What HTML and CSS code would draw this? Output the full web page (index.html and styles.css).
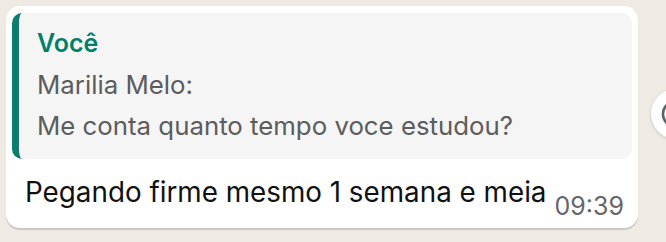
FILE: index.html
```html
<!DOCTYPE html>
<html lang="pt-BR">
<head>
    <meta charset="UTF-8">
    <meta name="viewport" content="width=device-width, initial-scale=1.0">
    <title>Mensagem</title>
    <link rel="stylesheet" href="styles.css">
</head>
<body>
    <div class="chat-row">
        <div class="bubble">
            <div class="quote">
                <div class="quote-author">Você</div>
                <div class="quote-text">Marilia Melo:</div>
                <div class="quote-text">Me conta quanto tempo voce estudou?</div>
            </div>
            <div class="message">
                <span class="message-text">Pegando firme mesmo 1 semana e meia</span>
                <span class="message-time">09:39</span>
            </div>
        </div>
        <button class="react-button" aria-label="Reagir">
            <svg width="30" height="30" viewBox="0 0 30 30" fill="none" stroke="#54656f" stroke-width="2.6" stroke-linecap="round">
                <circle cx="15" cy="15" r="13"/>
                <path d="M9 18c1.6 2.6 3.6 3.8 6 3.8s4.4-1.2 6-3.8"/>
                <circle cx="10.5" cy="11.5" r="0.8" fill="#54656f"/>
                <circle cx="19.5" cy="11.5" r="0.8" fill="#54656f"/>
            </svg>
        </button>
    </div>
</body>
</html>
```

FILE: styles.css
```css
body {
    margin: 0;
    height: 242px;
    overflow: hidden;
    background-color: #efeae3;
    font-family: Inter, 'Liberation Sans', sans-serif;
}
.chat-row {
    display: flex;
    align-items: center;
    gap: 13px;
    padding: 6px 0 0 6px;
    overflow: hidden;
}
.bubble {
    width: 632px;
    flex-shrink: 0;
    background: #fff;
    border-radius: 14px;
    padding: 7px 6px 0 6px;
    box-sizing: border-box;
    box-shadow: 0 1.5px 1px rgba(11, 20, 26, 0.16);
    margin-bottom: 3px;
}
.quote {
    background: #f5f5f5;
    border-left: 7px solid #0c7c6c;
    border-radius: 10px;
    padding: 10px 16px 13px 18px;
}
.quote-author {
    font-size: 25px;
    line-height: 41px;
    font-weight: 600;
    color: #008069;
}
.quote-text {
    font-size: 25.8px;
    line-height: 41px;
    color: #5c5c5c;
}
.message {
    display: flex;
    align-items: flex-end;
    justify-content: space-between;
    padding: 15px 8px 8px 13px;
}
.message-text {
    font-size: 27.8px;
    line-height: 36px;
    color: #111;
    margin-bottom: 10px;
}
.message-time {
    font-size: 25px;
    line-height: 27px;
    color: #666;
}
.react-button {
    width: 50px;
    height: 50px;
    flex-shrink: 0;
    border: none;
    border-radius: 50%;
    background: #fff;
    box-shadow: 0 1px 3px rgba(11, 20, 26, 0.18);
    display: flex;
    align-items: center;
    justify-content: center;
    padding: 0;
    margin-top: -10px;
}
```
